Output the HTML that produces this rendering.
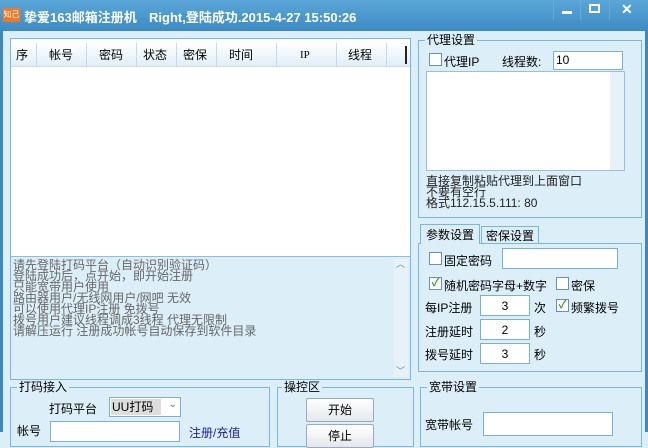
<!DOCTYPE html>
<html><head><meta charset="utf-8"><style>
*{margin:0;padding:0;box-sizing:border-box}
body{width:648px;height:432px;overflow:hidden;font-family:"Liberation Sans","Noto Sans CJK SC","WenQuanYi Zen Hei",sans-serif;font-size:12px;color:#000;background:#dcefF8;position:relative}
.a{position:absolute;white-space:nowrap}
#tb{left:0;top:0;width:648px;height:31px;background:linear-gradient(#5aa6d8,#3d8bc4);color:#fff;font-weight:bold;font-size:13px}
.grp{position:absolute;border:1px solid #78b8d8}
.lg{position:absolute;top:-8px;left:6px;background:#dcefF8;padding:0 2px;font-size:12px;line-height:14px}
.cb{position:absolute;width:13px;height:13px;border:1px solid #6a8fb0;background:#fff}
.inp{position:absolute;background:#fff;border:1px solid #7ab0d0;text-align:center;line-height:20px}
.btn{position:absolute;border:1px solid #9ab;border-radius:2px;background:linear-gradient(#fff,#e4e8ec);text-align:center;line-height:22px}
.ck{color:#3a9a2a;font-size:11px;line-height:11px;text-align:center;font-weight:bold}
</style></head><body>
<div id="tb" class="a">
 <div class="a" style="left:3px;top:8px;width:17px;height:14px;background:#f07820;font-size:8px;line-height:14px;text-align:center;font-weight:normal;overflow:hidden">知己</div>
 <div class="a" style="left:24px;top:7px">挚爱163邮箱注册机</div>
 <div class="a" style="left:149px;top:7px">Right,登陆成功.2015-4-27 15:50:26</div>
 <div class="a" style="left:553px;top:0;width:1px;height:20px;background:#6aaad6"></div>
 <div class="a" style="left:580px;top:0;width:1px;height:20px;background:#6aaad6"></div>
 <div class="a" style="left:609px;top:0;width:1px;height:20px;background:#6aaad6"></div>
 <div class="a" style="left:562px;top:11px;width:10px;height:3px;background:#fff"></div>
 <div class="a" style="left:589px;top:4px;width:11px;height:9px;border:2px solid #fff"></div>
 <div class="a" style="left:621px;top:1px;font-size:14px">✕</div>
</div>
<div class="a" style="left:0;top:31px;width:3px;height:401px;background:#3b88c2"></div>
<div class="a" style="left:645px;top:31px;width:3px;height:401px;background:#3b88c2"></div>

<!-- list -->
<div class="a" style="left:10px;top:38px;width:401px;height:342px;border:1px solid #78b8d8;background:#fff"></div>
<div class="a" style="left:11px;top:43px;width:399px;height:24px;background:linear-gradient(#fff,#dfeef8);border-bottom:1px solid #c8dcea;line-height:24px">
 <span class="a" style="left:5px">序</span><span class="a" style="left:25px;height:24px;border-left:1px solid #c8d8e8"></span>
 <span class="a" style="left:38px">帐号</span><span class="a" style="left:75px;height:24px;border-left:1px solid #c8d8e8"></span>
 <span class="a" style="left:88px">密码</span><span class="a" style="left:125px;height:24px;border-left:1px solid #c8d8e8"></span>
 <span class="a" style="left:132px">状态</span><span class="a" style="left:165px;height:24px;border-left:1px solid #c8d8e8"></span>
 <span class="a" style="left:172px">密保</span><span class="a" style="left:205px;height:24px;border-left:1px solid #c8d8e8"></span>
 <span class="a" style="left:218px">时间</span><span class="a" style="left:265px;height:24px;border-left:1px solid #c8d8e8"></span>
 <span class="a" style="left:289px;font-family:'Liberation Serif',serif;font-size:11px">IP</span><span class="a" style="left:325px;height:24px;border-left:1px solid #c8d8e8"></span>
 <span class="a" style="left:337px">线程</span><span class="a" style="left:375px;height:24px;border-left:1px solid #c8d8e8"></span>
 <span class="a" style="left:394px;top:3px;height:18px;border-left:2px solid #222"></span>
</div>
<div class="a" style="left:11px;top:256px;width:399px;height:123px;background:#dcefF8;border-top:1px solid #8ac0dc;color:#666;font-size:12px;line-height:11px;padding:3px 0 0 2px">
请先登陆打码平台（自动识别验证码）<br>登陆成功后，点开始，即开始注册<br>只能宽带用户使用<br>路由器用户/无线网用户/网吧 无效<br>可以使用代理IP注册 免拨号<br>拨号用户建议线程调成3线程 代理无限制<br>请解压运行 注册成功帐号自动保存到软件目录
 <div class="a" style="right:2px;top:2px;width:14px;height:118px;background:#e6f2f8"><div class="a" style="top:0;left:2px;color:#5a8ac0;font-size:9px">︿</div><div class="a" style="bottom:0;left:2px;color:#5a8ac0;font-size:9px">﹀</div></div>
</div>

<!-- proxy -->
<div class="grp" style="left:418px;top:40px;width:224px;height:178px">
 <div class="lg">代理设置</div>
 <div class="cb" style="left:10px;top:12px"></div>
 <div class="a" style="left:25px;top:12px">代理IP</div>
 <div class="a" style="left:83px;top:12px">线程数:</div>
 <div class="inp" style="left:134px;top:10px;width:70px;height:19px;text-align:left;padding-left:2px;line-height:17px">10</div>
 <div class="a" style="left:7px;top:30px;width:199px;height:100px;background:#fff;border:1px solid #9ac0d8"><div class="a" style="right:0;top:0;width:14px;height:98px;background:#e6f2f8"></div></div>
 <div class="a" style="left:7px;top:135px;line-height:11px;color:#222">直接复制粘贴代理到上面窗口<br>不要有空行<br>格式112.15.5.111: 80</div>
</div>

<!-- tabs -->
<div class="a" style="left:420px;top:224px;width:60px;height:20px;border:1px solid #78b8d8;border-bottom:none;background:#dcefF8;text-align:center;line-height:20px;z-index:2">参数设置</div>
<div class="a" style="left:481px;top:226px;width:58px;height:18px;border:1px solid #78b8d8;border-bottom:none;text-align:center;line-height:18px">密保设置</div>
<div class="grp" style="left:418px;top:243px;width:224px;height:129px">
 <div class="cb" style="left:10px;top:8px"></div><div class="a" style="left:25px;top:8px">固定密码</div>
 <div class="inp" style="left:83px;top:4px;width:116px;height:21px"></div>
 <div class="cb ck" style="left:10px;top:33px">✓</div><div class="a" style="left:25px;top:33px">随机密码字母+数字</div>
 <div class="cb" style="left:137px;top:33px"></div><div class="a" style="left:152px;top:33px">密保</div>
 <div class="a" style="left:6px;top:55px">每IP注册</div><div class="inp" style="left:61px;top:51px;width:50px;height:21px">3</div><div class="a" style="left:115px;top:55px">次</div>
 <div class="cb ck" style="left:137px;top:55px">✓</div><div class="a" style="left:152px;top:55px">频繁拨号</div>
 <div class="a" style="left:6px;top:79px">注册延时</div><div class="inp" style="left:61px;top:75px;width:50px;height:21px">2</div><div class="a" style="left:115px;top:79px">秒</div>
 <div class="a" style="left:6px;top:102px">拨号延时</div><div class="inp" style="left:61px;top:99px;width:50px;height:21px">3</div><div class="a" style="left:115px;top:102px">秒</div>
</div>

<!-- bottom -->
<div class="grp" style="left:10px;top:387px;width:260px;height:60px">
 <div class="lg">打码接入</div>
 <div class="a" style="left:38px;top:12px">打码平台</div>
 <div class="a" style="left:98px;top:9px;width:72px;height:20px;border:1px solid #7ab0d0;background:#fff"><div class="a" style="left:1px;top:1px;width:50px;height:16px;background:#ddd;line-height:16px;padding-left:1px">UU打码</div><div class="a" style="right:3px;top:1px;color:#4a80c0;font-size:10px">⌄</div></div>
 <div class="a" style="left:6px;top:34px">帐号</div>
 <div class="inp" style="left:39px;top:33px;width:130px;height:21px"></div>
 <div class="a" style="left:178px;top:36px;color:#2020a0">注册/充值</div>
</div>
<div class="grp" style="left:277px;top:387px;width:137px;height:60px">
 <div class="lg" style="left:4px">操控区</div>
 <div class="btn" style="left:28px;top:10px;width:68px;height:24px">开始</div>
 <div class="btn" style="left:28px;top:36px;width:68px;height:24px">停止</div>
</div>
<div class="grp" style="left:420px;top:387px;width:222px;height:60px">
 <div class="lg">宽带设置</div>
 <div class="a" style="left:4px;top:28px">宽带帐号</div>
 <div class="inp" style="left:62px;top:24px;width:130px;height:24px"></div>
</div>
</body></html>
